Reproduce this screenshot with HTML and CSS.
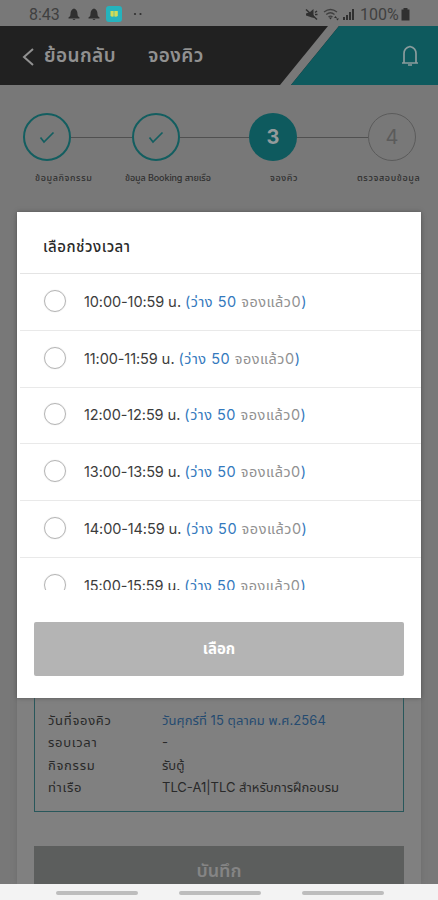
FILE: index.html
```html
<!DOCTYPE html>
<html lang="th">
    <head>
        <meta charset="utf-8">
        <title>จองคิว</title>
        <link rel="stylesheet" href="styles.css">
    </head>
    <body>
        <div class="status">
            <span class="clock">8:43</span>
            <svg class="bell-small" viewBox="0 0 12 13"><path d="M6 0.5Q9.5 1.5 9.5 6L9.8 8L11.5 9.5V10.5H0.5V9.5L2.2 8L2.5 6Q2.5 1.5 6 0.5ZM4.5 11H7.5Q6 13 4.5 11Z"/></svg>
            <svg class="bell-small second" viewBox="0 0 12 13"><path d="M6 0.5Q9.5 1.5 9.5 6L9.8 8L11.5 9.5V10.5H0.5V9.5L2.2 8L2.5 6Q2.5 1.5 6 0.5ZM4.5 11H7.5Q6 13 4.5 11Z"/></svg>
            <svg class="app" viewBox="0 0 16 16"><rect width="16" height="16" rx="3" fill="#25b3bd"/><path d="M4.5 5H7.7V10.5H6.5V11L4.5 10ZM8.3 5H11.8V10L9.5 11V10.5H8.3Z" fill="#cfdc58"/></svg>
            <svg class="dots" viewBox="0 0 10 4"><circle cx="2" cy="2" r="1.1"/><circle cx="7.5" cy="2" r="1.1"/></svg>
            <svg class="mute" viewBox="0 0 13 13"><path d="M1 5.500L5 4L8.500 1V7L10 10L7 9.500L4 8.500L1 7.500Z"/><path d="M1 1.500L12 11.500M10 4.500L12 3M10 6.500H12.500" fill="none" stroke="#303030" stroke-width="1.500"/></svg>
            <svg class="wifi" viewBox="0 0 17 13"><path d="M1 4Q7.500 -1 14 4M3.200 6.500Q7.500 3 11.500 6.500M5.500 9Q7.500 7.200 9.500 9" fill="none" stroke="#404040" stroke-width="1.300"/><path d="M6 9.500H9L7.500 11.500ZM11 10L12.500 8L14 10ZM13 10.500H16L14.500 12.500Z"/></svg>
            <svg class="signal" viewBox="0 0 12 13"><path d="M0 9H2V12H0ZM3 7H5V12H3ZM6 4H8V12H6ZM9 1H11V12H9Z"/></svg>
            <span class="percent">100%</span>
            <svg class="battery" viewBox="0 0 9 13"><path d="M2.500 0H6.500V1.500H8.500V12.500H0.500V1.500H2.500Z"/></svg>
        </div>
        <div class="header">
            <svg class="slant" viewBox="0 0 162 59"><path d="M52 0H63L15 59H4Z" fill="#787878"/><path d="M63 0H162V59H15Z" fill="#0e5a5e"/></svg>
            <svg class="back" viewBox="0 0 12 18"><path d="M11 1L2 9L11 17" fill="none" stroke="#919191" stroke-width="2"/></svg>
            <span class="back-text">ย้อนกลับ</span>
            <span class="title">จองคิว</span>
            <svg class="bell" viewBox="0 0 18 22"><path d="M1 18H17M3 18V8.500Q3 3 9 1.500Q15 3 15 8.500V18M7 20H11" fill="none" stroke="#8b9c9d" stroke-width="1.700"/></svg>
        </div>
        <div class="steps">
            <div class="circle done"><svg viewBox="0 0 16 13"><path d="M1.500 6.500L5 11L14.500 1.500" fill="none" stroke="#135e60" stroke-width="1.700"/></svg></div>
            <div class="line"></div>
            <div class="circle done"><svg viewBox="0 0 16 13"><path d="M1.500 6.500L5 11L14.500 1.500" fill="none" stroke="#135e60" stroke-width="1.700"/></svg></div>
            <div class="line second"></div>
            <div class="circle current">3</div>
            <div class="line third"></div>
            <div class="circle">4</div>
        </div>
        <div class="labels">
            <span class="label one">ข้อมูลกิจกรรม</span>
            <span class="label two">ข้อมูล Booking สายเรือ</span>
            <span class="label three">จองคิว</span>
            <span class="label four">ตรวจสอบข้อมูล</span>
        </div>
        <div class="card">
            <div class="summary">
                <span class="name">วันที่จองคิว</span><span class="date">วันศุกร์ที่ 15 ตุลาคม พ.ศ.2564</span>
                <span class="name">รอบเวลา</span><span>-</span>
                <span class="name">กิจกรรม</span><span>รับตู้</span>
                <span class="name">ท่าเรือ</span><span>TLC-A1|TLC สำหรับการฝึกอบรม</span>
            </div>
            <div class="save"><span>บันทึก</span></div>
        </div>
        <div class="nav"><i></i><i></i><i></i></div>

        <div class="modal">
            <div class="modal-title"><span>เลือกช่วงเวลา</span></div>
            <ul class="times">
                <li><i class="radio"></i><span class="slot">10:00-10:59 น. <b>(ว่าง 50 <em>จองแล้ว0</em>)</b></span></li>
                <li><i class="radio"></i><span class="slot">11:00-11:59 น. <b>(ว่าง 50 <em>จองแล้ว0</em>)</b></span></li>
                <li><i class="radio"></i><span class="slot">12:00-12:59 น. <b>(ว่าง 50 <em>จองแล้ว0</em>)</b></span></li>
                <li><i class="radio"></i><span class="slot">13:00-13:59 น. <b>(ว่าง 50 <em>จองแล้ว0</em>)</b></span></li>
                <li><i class="radio"></i><span class="slot">14:00-14:59 น. <b>(ว่าง 50 <em>จองแล้ว0</em>)</b></span></li>
                <li><i class="radio"></i><span class="slot">15:00-15:59 น. <b>(ว่าง 50 <em>จองแล้ว0</em>)</b></span></li>
            </ul>
            <div class="choose"><span>เลือก</span></div>
        </div>
    </body>
</html>
```
FILE: styles.css
```css
* {
    box-sizing: border-box;
}
body {
    margin: 0;
    width: 438px;
    height: 900px;
    overflow: hidden;
    position: relative;
    display: flex;
    flex-direction: column;
    background: #787878;
    color: #292929;
    font-family: Inter, "Noto Sans Thai", "Noto Sans", sans-serif;
    font-size: 14px;
    white-space: nowrap;
}
svg {
    display: block;
    flex: none;
}
.status {
    height: 26px;
    display: flex;
    align-items: center;
    padding: 2px 0 0 29px;
    font-family: Roboto, sans-serif;
    font-size: 16px;
    color: #404040;
    fill: #303030;
}
.clock {
    width: 39px;
}
.bell-small {
    width: 12px;
    height: 13px;
}
.second {
    margin-left: 8px;
}
.app {
    width: 16px;
    height: 16px;
    margin-left: 6px;
}
.dots {
    width: 10px;
    height: 4px;
    margin-left: 11px;
}
.mute {
    width: 13px;
    height: 13px;
    margin-left: 162px;
}
.wifi {
    width: 17px;
    height: 13px;
    margin-left: 5px;
}
.signal {
    width: 12px;
    height: 13px;
    margin-left: 3px;
}
.percent {
    width: 41px;
    margin-left: 5px;
}
.battery {
    width: 9px;
    height: 13px;
}
.header {
    height: 59px;
    flex: none;
    position: relative;
    display: flex;
    align-items: center;
    padding: 2px 0 0 22px;
    background: #212121;
    color: #919191;
    font-size: 19px;
    font-weight: 600;
    letter-spacing: .4px;
}
.slant {
    position: absolute;
    right: 0;
    top: 0;
    width: 162px;
    height: 59px;
}
.back {
    width: 12px;
    height: 18px;
}
.back-text {
    width: 104px;
    margin-left: 10px;
}
.bell {
    position: absolute;
    left: 401px;
    top: 19px;
    width: 18px;
    height: 22px;
}
.steps {
    height: 48px;
    margin-top: 28px;
    padding-left: 23px;
    display: flex;
    align-items: center;
}
.circle {
    width: 48px;
    height: 48px;
    flex: none;
    border: 1px solid #5b5b5b;
    border-radius: 50%;
    display: flex;
    align-items: center;
    justify-content: center;
    color: #5b5b5b;
    font-size: 20px;
}
.circle svg {
    width: 16px;
    height: 13px;
}
.done {
    border: 2px solid #135e60;
}
.current {
    border: 0;
    background: #0e5a5e;
    color: #939b9c;
    font-weight: 700;
}
.line {
    width: 61px;
    height: 1px;
    background: #505050;
}
.line.second {
    width: 69px;
    margin: 0;
}
.line.third {
    width: 71px;
}
.labels {
    display: flex;
    height: 20px;
    margin-top: 7px;
    font-size: 9px;
    line-height: 20px;
    font-weight: 500;
    letter-spacing: .6px;
    color: #303030;
}
.label {
    flex: none;
}
.one {
    width: 90px;
    margin-left: 35px;
}
.two {
    width: 145px;
    letter-spacing: -.1px;
}
.three {
    width: 87px;
}
.card {
    margin: 30px 17px 0;
    flex: 1;
    overflow: hidden;
    background: #808080;
    box-shadow: 0 0 5px #6c6c6c;
    padding: 430px 17px 0;
}
.summary {
    height: 164px;
    border: 1px solid #28575b;
    padding: 60px 0 0 13px;
    display: grid;
    grid-template-columns: 114px 1fr;
    grid-auto-rows: 22.3px;
    line-height: 22px;
    font-size: 13px;
}
.name {
    letter-spacing: .7px;
}
.date {
    color: #254b70;
    letter-spacing: .05px;
}
.save {
    height: 54px;
    margin-top: 34px;
    background: #5c5e5d;
    color: #858585;
    line-height: 49px;
    text-align: center;
    font-size: 18px;
    font-weight: 600;
}
.nav {
    height: 16px;
    flex: none;
    position: relative;
    display: flex;
    align-items: center;
    gap: 41px;
    padding: 1px 0 0 56px;
    background: #f3f3f3;
}
.nav i {
    width: 82px;
    height: 4px;
    border-radius: 2px;
    background: #bdbdbd;
}
.modal {
    position: absolute;
    left: 17px;
    top: 212px;
    width: 404px;
    height: 486px;
    background: #fff;
    box-shadow: 0 0 4px #555;
}
.modal-title {
    height: 62px;
    margin-left: 3px;
    padding: 6px 0 0 23px;
    line-height: 58px;
    border-bottom: 1px solid #e4e4e4;
    font-size: 15px;
    font-weight: 500;
    letter-spacing: .5px;
}
.times {
    height: 316px;
    margin: 0 0 0 3px;
    padding: 0;
    overflow: hidden;
    list-style: none;
}
.times li {
    height: 56.8px;
    display: flex;
    align-items: center;
    padding: 0 0 2px 24px;
    border-bottom: 1px solid #e9e9e9;
}
.radio {
    width: 22px;
    height: 22px;
    margin-right: 18px;
    border: 1.5px solid #b4b4b4;
    box-shadow: 0 0 1px #ccc;
    border-radius: 50%;
}
.slot {
    font-size: 14.5px;
    letter-spacing: -.1px;
    color: #3c3c3c;
    padding-top: 4px;
}
.slot b {
    font-weight: 400;
    letter-spacing: .5px;
    color: #3479bd;
}
.slot em {
    font-style: normal;
    color: #919191;
}
.choose {
    height: 54px;
    margin: 32px 17px 0;
    border-radius: 2px;
    background: #b4b4b4;
    color: #fff;
    line-height: 54px;
    text-align: center;
    font-size: 15px;
    font-weight: 700;
}
```
